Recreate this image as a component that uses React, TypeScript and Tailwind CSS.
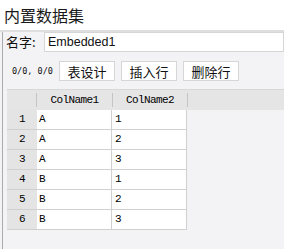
const rows = [
  ["1", "A", "1"],
  ["2", "A", "2"],
  ["3", "A", "3"],
  ["4", "B", "1"],
  ["5", "B", "2"],
  ["6", "B", "3"],
];

const cjk = "font-['Noto_Sans_CJK_SC','Noto_Sans',sans-serif]";
const mono = "font-['Liberation_Mono',monospace] text-[11px] tracking-[-0.6px] text-black";

function ToolButton({ label }: { label: string }) {
  return (
    <button
      className={`flex h-[20px] w-[56px] items-center justify-center border border-[#d6d6d6] bg-white text-[13px] leading-none text-[#111] ${cjk}`}
    >
      {label}
    </button>
  );
}

export default function App() {
  return (
    <div className={`flex h-[249px] w-[284px] flex-col overflow-hidden bg-[#f3f3f5] ${cjk}`}>
      <div className="flex h-[32px] shrink-0 items-center border-b-2 border-[#dedede] bg-white pl-[4px] text-[16px] text-[#1a1a1a]">
        内置数据集
      </div>

      <div className="ml-[2px] flex flex-1 flex-col border-l border-[#ababab]">
        {/* name */}
        <div className="flex h-[20px] items-center pl-[3px]">
          <span className="w-[38px] text-[13px] text-[#111]">名字:</span>
          <div className="flex h-[20px] flex-1 items-center border border-[#d6d6d6] bg-white pl-[3px] font-['Liberation_Sans',sans-serif] text-[12.5px] text-[#111]">
            Embedded1
          </div>
        </div>

        {/* toolbar */}
        <div className="mt-[9px] flex items-center pl-[9px]">
          <span className="w-[47px] font-['DejaVu_Sans_Mono',monospace] text-[8.5px] text-[#111]">0/0, 0/0</span>
          <div className="flex gap-[6px]">
            <ToolButton label="表设计" />
            <ToolButton label="插入行" />
            <ToolButton label="删除行" />
          </div>
        </div>

        {/* grid */}
        <div className="mt-[8px] flex flex-col pl-[4px]">
          <div className="flex h-[21px] items-center border-t border-[#d8d8d8] bg-[#e5e5e5]">
            <div className="flex h-full w-[30px] items-center justify-end">
              <span className="h-[14px] w-px bg-[#c4c4c4]" />
            </div>
            <div className={`flex h-full w-[75px] items-center justify-center ${mono}`}>ColName1</div>
            <span className="h-[14px] w-px bg-[#c4c4c4]" />
            <div className={`flex h-full w-[74px] items-center justify-center ${mono}`}>ColName2</div>
            <span className="h-[14px] w-px bg-[#c4c4c4]" />
          </div>
          {rows.map(([n, a, b]) => (
            <div key={n} className="flex h-[20px]">
              <div className={`flex w-[30px] items-center justify-center border-b border-[#d0d0d0] bg-[#e4e4e4] ${mono}`}>
                {n}
              </div>
              <div className={`flex w-[75px] items-center border-b border-r border-[#d0d0d0] bg-white pl-[2px] ${mono}`}>
                {a}
              </div>
              <div className={`flex w-[75px] items-center border-b border-r border-[#d0d0d0] bg-white pl-[3px] ${mono}`}>
                {b}
              </div>
            </div>
          ))}
        </div>
      </div>
    </div>
  );
}
